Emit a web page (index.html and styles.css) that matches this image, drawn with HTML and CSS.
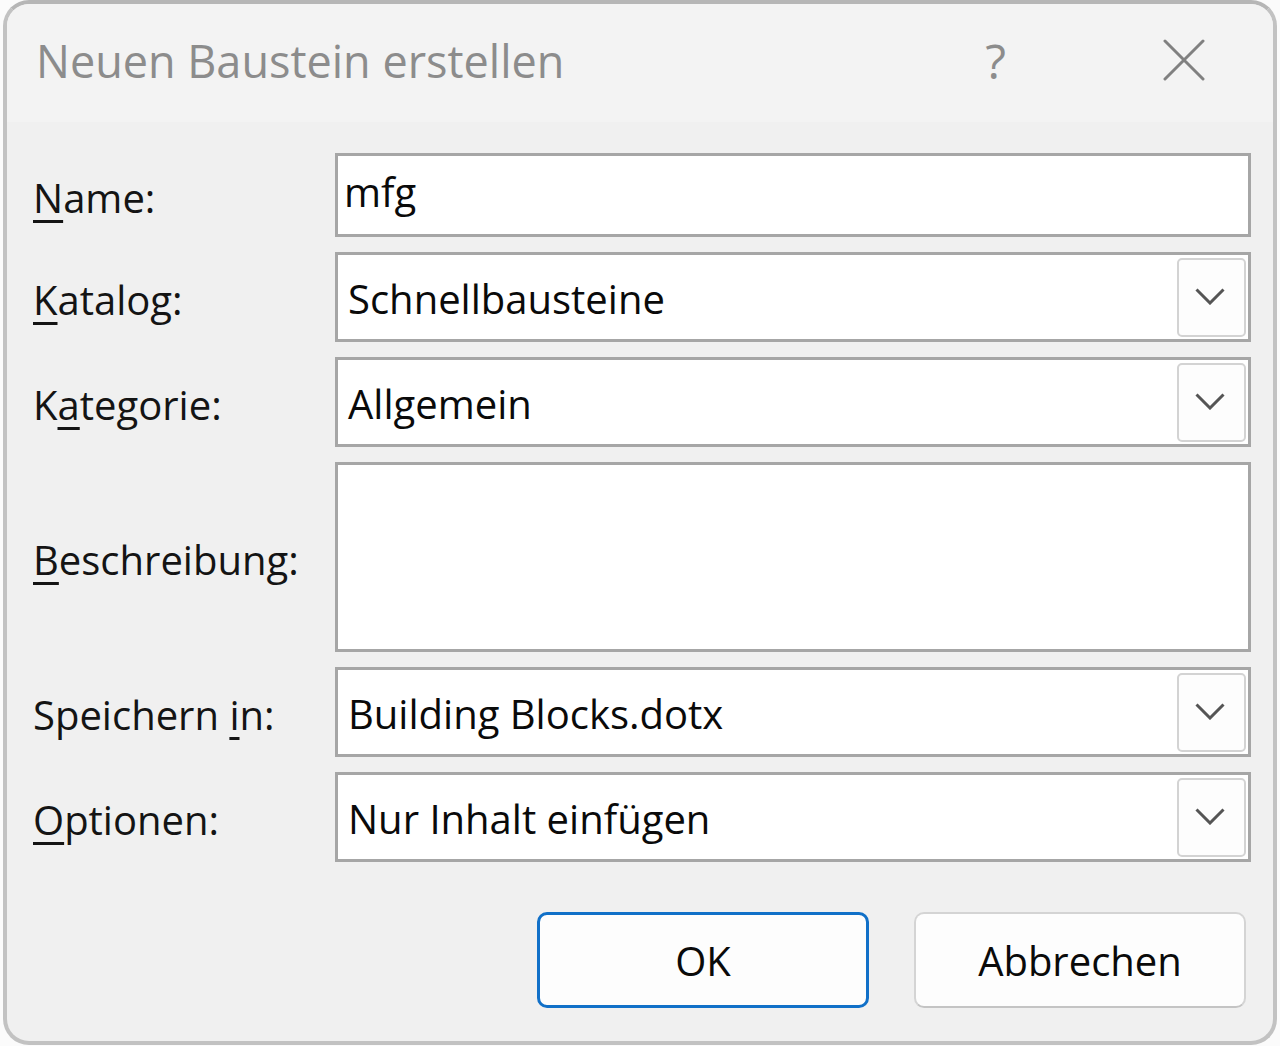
FILE: index.html
```html
<!DOCTYPE html>
<html lang="de">
<head>
<meta charset="utf-8">
<title>Neuen Baustein erstellen</title>
<link rel="stylesheet" href="styles.css">
</head>
<body>
<div class="dialog">
  <header class="titlebar">
    <h1 class="title">Neuen Baustein erstellen</h1>
    <span class="help">?</span>
    <svg class="close" width="42" height="42" viewBox="0 0 42 42">
      <path d="M2 2 L40 40 M40 2 L2 40" stroke="#808080" stroke-width="3" stroke-linecap="round" fill="none"/>
    </svg>
  </header>

  <form class="form">
    <label class="label"><span><u>N</u>ame:</span></label>
    <div class="field field-name"><span class="value">mfg</span></div>

    <label class="label"><span><u>K</u>atalog:</span></label>
    <div class="field field-select">
      <span class="value">Schnellbausteine</span>
      <span class="drop"><svg width="30" height="17" viewBox="0 0 30 17"><polyline points="1.5,1.5 15,15 28.5,1.5" fill="none" stroke="#555" stroke-width="3"/></svg></span>
    </div>

    <label class="label"><span>K<u>a</u>tegorie:</span></label>
    <div class="field field-select">
      <span class="value">Allgemein</span>
      <span class="drop"><svg width="30" height="17" viewBox="0 0 30 17"><polyline points="1.5,1.5 15,15 28.5,1.5" fill="none" stroke="#555" stroke-width="3"/></svg></span>
    </div>

    <label class="label"><span><u>B</u>eschreibung:</span></label>
    <div class="field field-area"></div>

    <label class="label"><span>Speichern <u>i</u>n:</span></label>
    <div class="field field-select">
      <span class="value">Building Blocks.dotx</span>
      <span class="drop"><svg width="30" height="17" viewBox="0 0 30 17"><polyline points="1.5,1.5 15,15 28.5,1.5" fill="none" stroke="#555" stroke-width="3"/></svg></span>
    </div>

    <label class="label"><span><u>O</u>ptionen:</span></label>
    <div class="field field-select">
      <span class="value">Nur Inhalt einfügen</span>
      <span class="drop"><svg width="30" height="17" viewBox="0 0 30 17"><polyline points="1.5,1.5 15,15 28.5,1.5" fill="none" stroke="#555" stroke-width="3"/></svg></span>
    </div>
  </form>

  <div class="actions">
    <button class="btn btn-default" type="button">OK</button>
    <button class="btn" type="button">Abbrechen</button>
  </div>
</div>
</body>
</html>
```

FILE: styles.css
```css
html, body {
  margin: 0;
  padding: 0;
  background: #fbfbfb;
}

body {
  font-family: "Open Sans", "Noto Sans", "Liberation Sans", sans-serif;
  color: #111;
}

.dialog {
  box-sizing: border-box;
  width: 1274px;
  height: 1045px;
  margin-left: 3px;
  border: 4px solid #c2c2c2;
  border-top-color: #b6b6b6;
  border-radius: 26px;
  background: #f0f0f0;
  overflow: hidden;
  display: flex;
  flex-direction: column;
}

/* title bar */
.titlebar {
  height: 118px;
  flex: none;
  background: #f3f3f3;
  display: flex;
  align-items: center;
  padding: 0 0 6px 29px;
  box-sizing: border-box;
}

.title {
  margin: 0;
  font-weight: 400;
  font-size: 45px;
  color: #8c8c8c;
  flex: 1;
}

.help {
  font-size: 48px;
  color: #8c8c8c;
  margin-right: 157px;
}

.close {
  margin-right: 68px;
  flex: none;
}

/* form grid */
.form {
  display: grid;
  grid-template-columns: 302px 916px;
  grid-template-rows: 84px 90px 90px 190px 90px 90px;
  row-gap: 15px;
  padding: 31px 0 0 26px;
  font-size: 40px;
}

.label {
  display: flex;
  align-items: center;
  padding-top: 4px;
  color: #141414;
}

.label u {
  text-decoration-thickness: 3px;
  text-underline-offset: 7px;
}

.field {
  box-sizing: border-box;
  background: #fff;
  border: 3px solid #a6a6a6;
  display: flex;
  align-items: center;
  color: #0a0a0a;
}

.field-name {
  align-items: flex-start;
  padding: 8px 0 0 6px;
}

.field-select {
  padding-left: 10px;
  justify-content: space-between;
}

.field-select .value {
  padding-top: 3px;
}

.drop {
  box-sizing: border-box;
  width: 69px;
  height: 79px;
  margin: 3px 2px 0 0;
  align-self: flex-start;
  border: 2px solid #d3d3d3;
  border-radius: 5px;
  background: #fdfdfd;
  display: flex;
  align-items: center;
  justify-content: center;
}

.drop svg {
  margin: -2px 4px 0 0;
}

/* buttons */
.actions {
  display: flex;
  justify-content: flex-end;
  gap: 45px;
  padding: 50px 27px 0 0;
}

.btn {
  box-sizing: border-box;
  width: 332px;
  height: 96px;
  border: 2px solid #d4d4d4;
  border-bottom-color: #c4c4c4;
  border-radius: 10px;
  background: #fdfdfd;
  font-family: inherit;
  font-size: 40px;
  color: #0a0a0a;
  padding: 0;
}

.btn-default {
  border: 3px solid #1170c8;
}
```
